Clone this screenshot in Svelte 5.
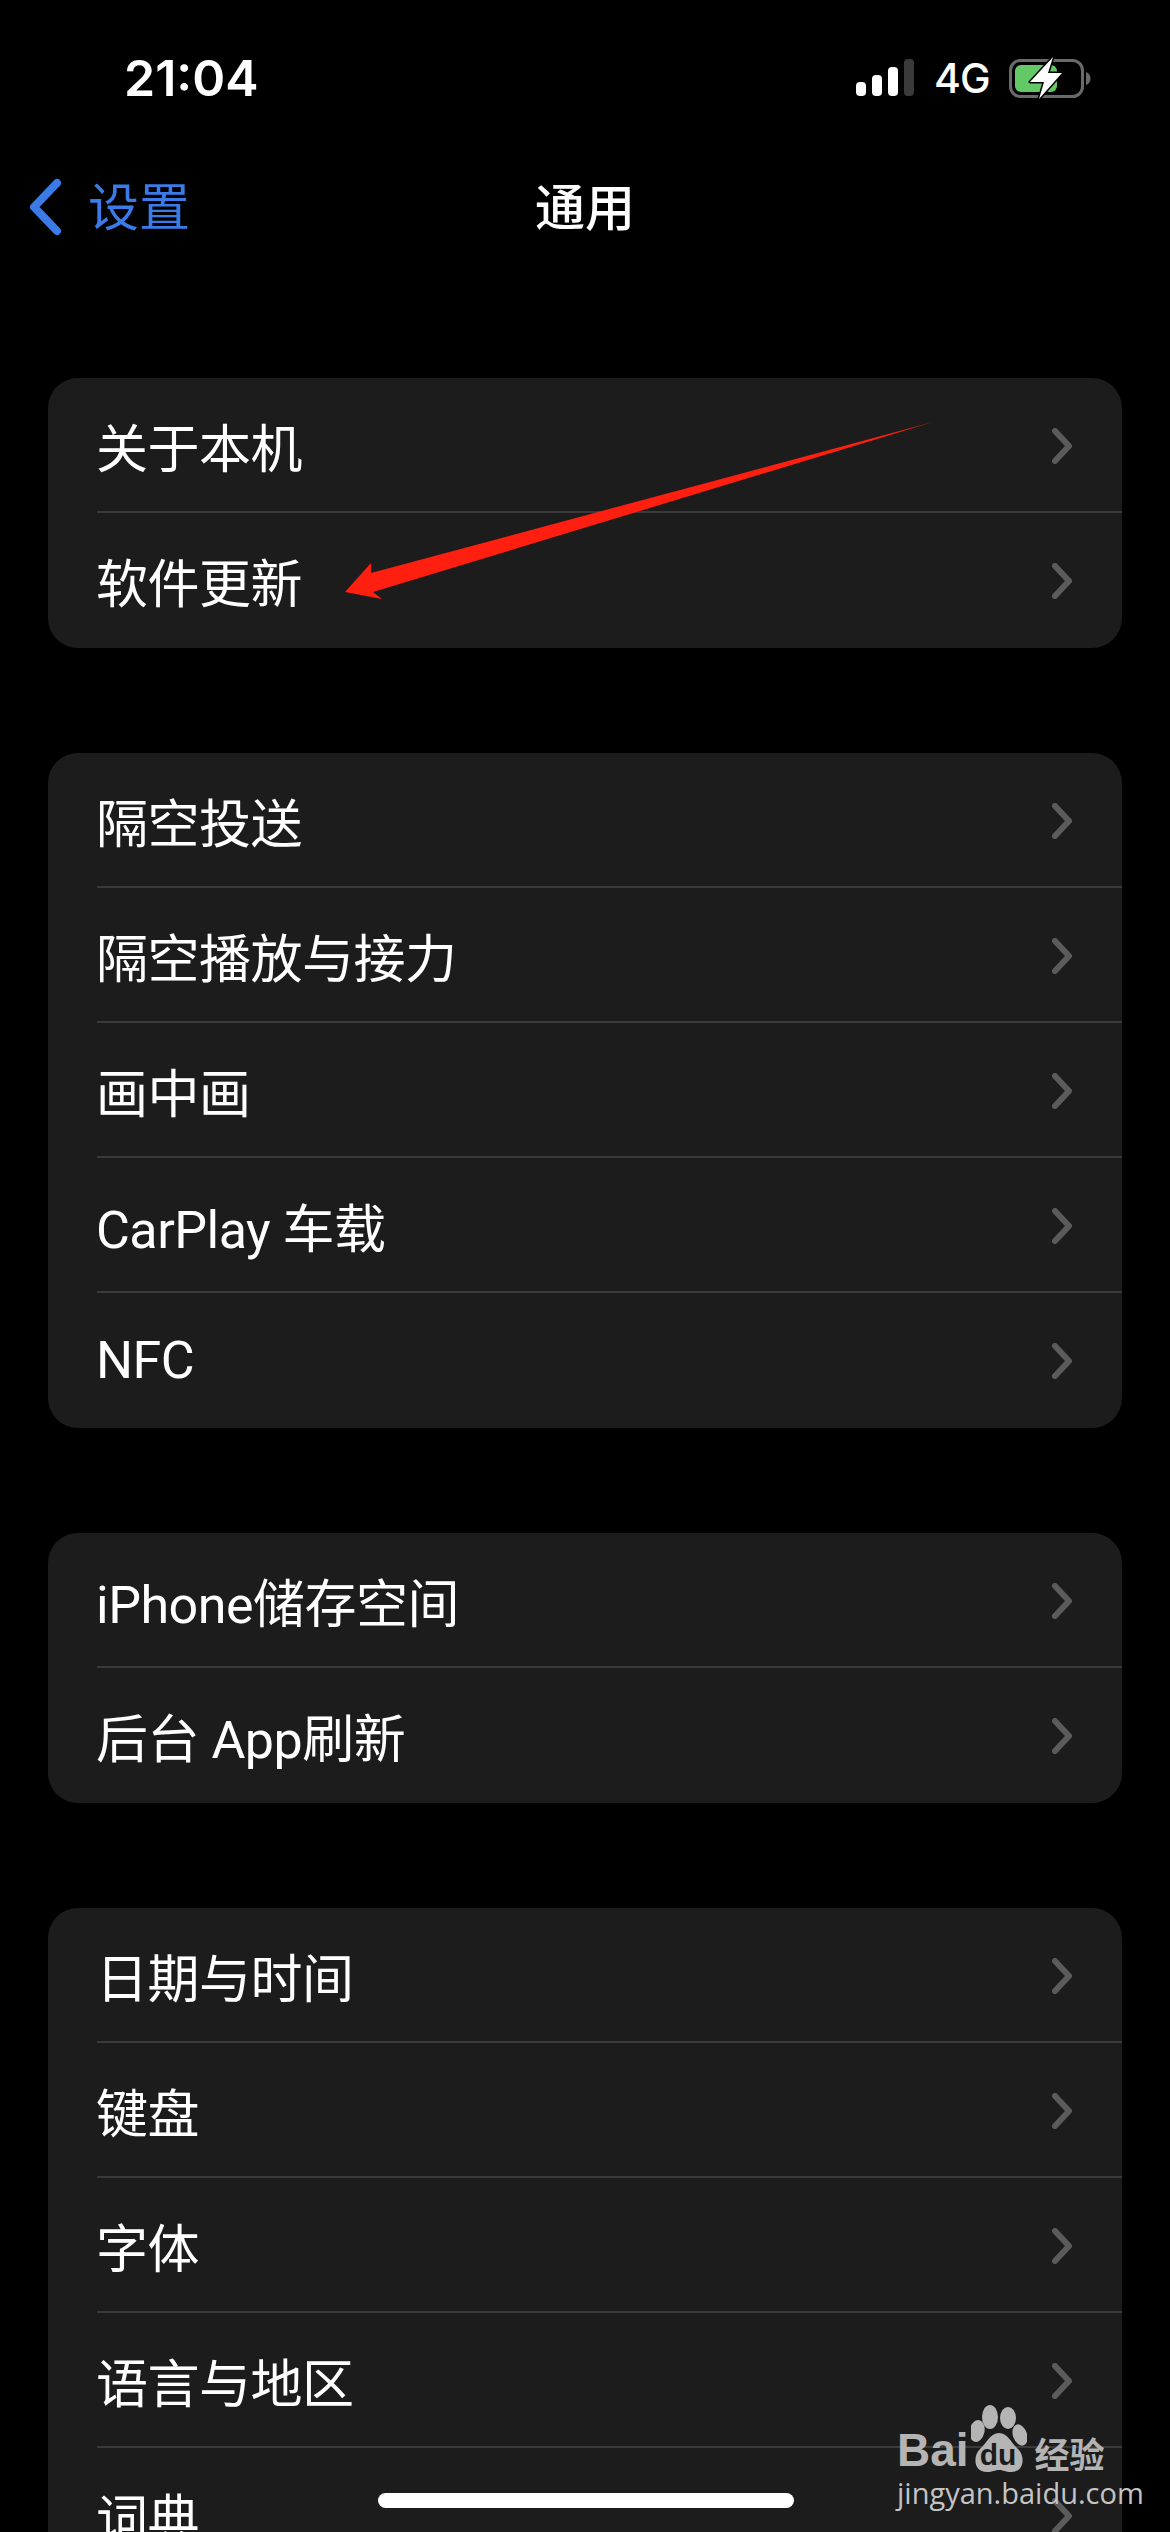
<script>
  const groups = [
    ['关于本机', '软件更新'],
    ['隔空投送', '隔空播放与接力', '画中画', 'CarPlay 车载', 'NFC'],
    ['iPhone储存空间', '后台 App刷新'],
    ['日期与时间', '键盘', '字体', '语言与地区', '词典']
  ];
</script>

<div class="page">
  <header class="status">
    <span class="time">21:04</span>
    <div class="status-icons">
      <svg width="58" height="38" viewBox="0 0 58 38">
        <rect x="0" y="23" width="10" height="14" rx="4" fill="#fff" />
        <rect x="16" y="16" width="10" height="21" rx="4" fill="#fff" />
        <rect x="32" y="8" width="10" height="29" rx="4" fill="#fff" />
        <rect x="48" y="0" width="10" height="37" rx="4" fill="#3a3a3a" />
      </svg>
      <span class="net">4G</span>
      <svg width="82" height="42" viewBox="0 0 82 42">
        <rect x="1.5" y="3.5" width="72" height="36" rx="10" fill="none" stroke="#6a6a6a" stroke-width="3" />
        <path d="M77 15 c3 1 4.500 3.500 4.500 6.500 s-1.500 5.500 -4.500 6.500z" fill="#6a6a6a" />
        <rect x="6" y="8" width="42" height="27" rx="6" fill="#63c966" />
        <path d="M44 0 L21 25 L35 25 L30 42 L53 16 L39 16 Z" fill="#fff" stroke="#000" stroke-width="3" stroke-linejoin="round" paint-order="stroke" />
      </svg>
    </div>
  </header>

  <nav class="nav">
    <div class="back">
      <svg width="34" height="58" viewBox="0 0 34 58">
        <path d="M29 5 L6 29 L29 53" fill="none" stroke="#3a7be8" stroke-width="8" stroke-linecap="round" stroke-linejoin="round" />
      </svg>
      <span>设置</span>
    </div>
    <h1>通用</h1>
  </nav>

  <main class="groups">
    {#each groups as rows}
      <section class="group">
        {#each rows as label}
          <div class="row">
            <div class="row-inner">
              <span>{label}</span>
              <svg width="20" height="36" viewBox="0 0 20 36">
                <path d="M3 3 L17 18 L3 33" fill="none" stroke="#5b5b5b" stroke-width="6" stroke-linecap="round" stroke-linejoin="round" />
              </svg>
            </div>
          </div>
        {/each}
      </section>
    {/each}
  </main>

  <!-- annotation drawn over the screenshot -->
  <svg class="arrow" width="1170" height="700" viewBox="0 0 1170 700">
    <polygon points="345,592 371,563 371,573 933,422 373,592 382,599" fill="#fe1f10" />
  </svg>

  <div class="home"></div>

  <div class="watermark">
    <div class="wm-top">
      <span class="wm-bai">Bai</span>
      <svg width="56" height="68" viewBox="0 0 56 68">
        <ellipse cx="19" cy="12" rx="8" ry="12" fill="#b4b4b4" />
        <ellipse cx="37" cy="13" rx="8" ry="11" fill="#b4b4b4" />
        <ellipse cx="6" cy="26" rx="7.500" ry="11" transform="rotate(12 6 26)" fill="#b4b4b4" />
        <ellipse cx="49" cy="30" rx="7" ry="11" transform="rotate(-20 49 30)" fill="#b4b4b4" />
        <path d="M28 28 C37 28 40 38 47 44 C54 50 54 67 40 67 C34 67 32 65 28 65 C24 65 22 67 16 67 C2 67 2 50 9 44 C16 38 19 28 28 28 Z" fill="#b4b4b4" />
        <text x="27" y="60" text-anchor="middle" class="wm-du">du</text>
      </svg>
      <span class="wm-cn">经验</span>
    </div>
    <div class="wm-url">jingyan.baidu.com</div>
  </div>
</div>

<style>
  :global(body) {
    margin: 0;
    background: #000;
  }

  .page {
    position: relative;
    width: 1170px;
    height: 2532px;
    overflow: hidden;
    background: #000;
    color: #fff;
    font-family: Inter, "Noto Sans CJK SC", sans-serif;
  }

  .status {
    height: 156px;
    box-sizing: border-box;
    padding: 0 79px 0 124px;
    display: flex;
    justify-content: space-between;
    align-items: center;
  }
  .time {
    font-size: 50px;
    font-weight: 600;
  }
  .status-icons {
    display: flex;
    align-items: center;
    gap: 20px;
  }
  .net {
    width: 55px;
    font-size: 41px;
    font-weight: 500;
    letter-spacing: -1px;
    white-space: nowrap;
  }

  .nav {
    height: 102px;
    display: grid;
    grid-template-columns: 1fr auto 1fr;
    align-items: center;
    padding-left: 28px;
  }
  .back {
    display: flex;
    align-items: center;
    gap: 26px;
    color: #3a7be8;
    font-size: 51px;
  }
  .back span {
    margin-bottom: 7px;
  }
  .nav h1 {
    margin: 0 0 7px -28px;
    font-size: 50px;
    font-weight: 500;
  }

  .groups {
    display: flex;
    flex-direction: column;
    gap: 105px;
    padding: 120px 48px 0;
  }
  .group {
    background: #1c1c1c;
    border-radius: 30px;
    overflow: hidden;
  }
  .row {
    height: 135px;
    padding-left: 49px;
  }
  .row + .row .row-inner {
    box-shadow: 0 -2px 0 #3a3a3a;
  }
  .row-inner {
    box-sizing: border-box;
    height: 100%;
    padding-right: 50px;
    display: flex;
    justify-content: space-between;
    align-items: center;
    font-family: Roboto, "Noto Sans CJK SC", sans-serif;
    font-size: 52px;
    letter-spacing: -0.5px;
  }
  .row-inner span {
    margin: 0 0 1px -1px;
  }

  .arrow {
    position: absolute;
    left: 0;
    top: 0;
  }

  .home {
    position: absolute;
    left: 378px;
    top: 2493px;
    width: 416px;
    height: 15px;
    border-radius: 8px;
    background: #fff;
  }

  .watermark {
    position: absolute;
    left: 897px;
    top: 2407px;
    width: 212px;
    color: #b4b4b4;
  }
  .wm-top {
    display: flex;
    align-items: flex-end;
    gap: 2px;
    height: 66px;
  }
  .wm-bai {
    font-family: "Liberation Sans", sans-serif;
    font-weight: 700;
    font-size: 46px;
    line-height: 46px;
  }
  .wm-cn {
    margin-left: 6px;
    font-family: "Noto Sans CJK SC", sans-serif;
    font-weight: 700;
    font-size: 35px;
    line-height: 40px;
  }
  .wm-du {
    font-family: "Liberation Sans", sans-serif;
    font-weight: 700;
    font-size: 30px;
    fill: #1c1c1c;
  }
  .wm-url {
    margin-top: 2px;
    font-family: "Open Sans", sans-serif;
    font-size: 29px;
    line-height: 36px;
    color: #c4c4c4;
    white-space: nowrap;
  }
</style>
